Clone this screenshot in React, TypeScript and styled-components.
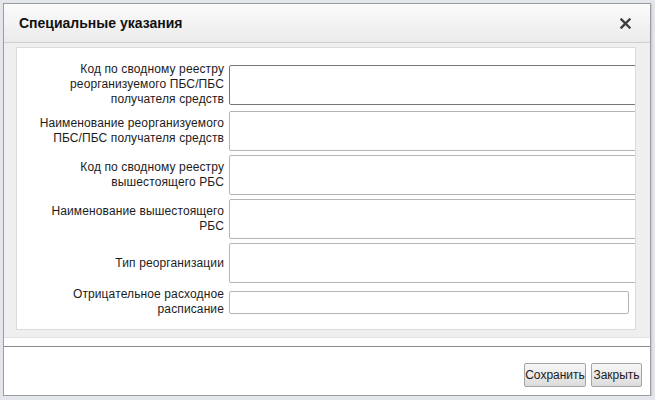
import React from "react";
import styled, { createGlobalStyle } from "styled-components";

const GlobalStyle = createGlobalStyle`
  html, body {
    margin: 0;
    padding: 0;
    background: #e3e7ec;
    font-family: "Liberation Sans", Arial, sans-serif;
  }
`;

const Page = styled.div`
  padding: 3px 0 0 3px;
`;

const Dialog = styled.div`
  width: 646px;
  border: 1px solid #9c9c9c;
  background: #ffffff;
  display: flex;
  flex-direction: column;
  box-shadow: 1px 1px 2px rgba(0, 0, 0, 0.15);
`;

const Header = styled.div`
  height: 38px;
  padding: 0 19px 0 15px;
  display: flex;
  align-items: center;
  justify-content: space-between;
  background: linear-gradient(#fbfbfb, #ebebeb);
  border-bottom: 1px solid #cfcfcf;
`;

const Title = styled.div`
  font-size: 14px;
  font-weight: bold;
  color: #111;
`;

const CloseButton = styled.button`
  border: 0;
  padding: 0;
  background: none;
  width: 11px;
  height: 11px;
  display: flex;
  cursor: pointer;
`;

const Body = styled.div`
  background: #efefef;
  padding: 4px 14px 7px 12px;
  border-bottom: 1px solid #e2e2e2;
`;

const Panel = styled.div`
  background: #ffffff;
  border: 1px solid #dadada;
  padding: 14px 0 12px 12px;
  overflow: hidden;
  display: grid;
  grid-template-columns: 195px 1fr;
  column-gap: 5px;
  row-gap: 4px;
  align-items: center;
`;

const Label = styled.label`
  font-size: 12px;
  line-height: 15px;
  letter-spacing: 0.12px;
  color: #1c1c1c;
  text-align: right;
`;

const Field = styled.textarea<{ $tall?: boolean; $focused?: boolean }>`
  display: block;
  box-sizing: border-box;
  width: ${(p) => (p.$tall ? "420px" : "400px")};
  height: ${(p) => (p.$tall ? "40px" : "23px")};
  margin: 0;
  padding: 2px 4px;
  border: 1px solid ${(p) => (p.$focused ? "#767676" : "#b4b4b4")};
  border-radius: 2px;
  background: #fff;
  resize: none;
  font-family: "Liberation Sans", Arial, sans-serif;
  font-size: 12px;
  outline: none;
`;

const Footer = styled.div`
  margin-top: 8px;
  border-top: 1px solid #8a8a8a;
  padding: 16px 8px 8px 0;
  display: flex;
  justify-content: flex-end;
  gap: 5px;
`;

const Button = styled.button<{ $w: number }>`
  width: ${(p) => p.$w}px;
  height: 24px;
  padding: 0;
  border: 1px solid #a3a3a3;
  border-radius: 2px;
  background: linear-gradient(#f7f7f7, #dcdcdc);
  font-family: "Liberation Sans", Arial, sans-serif;
  font-size: 12px;
  color: #1c1c1c;
  cursor: pointer;
`;

const fields: { label: React.ReactNode; tall: boolean; focused?: boolean }[] = [
  {
    label: (
      <>
        Код по сводному реестру
        <br />
        реорганизуемого ПБС/ПБС
        <br />
        получателя средств
      </>
    ),
    tall: true,
    focused: true,
  },
  {
    label: (
      <>
        Наименование реорганизуемого
        <br />
        ПБС/ПБС получателя средств
      </>
    ),
    tall: true,
  },
  {
    label: (
      <>
        Код по сводному реестру
        <br />
        вышестоящего РБС
      </>
    ),
    tall: true,
  },
  {
    label: (
      <>
        Наименование вышестоящего
        <br />
        РБС
      </>
    ),
    tall: true,
  },
  { label: <>Тип реорганизации</>, tall: true },
  {
    label: (
      <>
        Отрицательное расходное
        <br />
        расписание
      </>
    ),
    tall: false,
  },
];

export default function App() {
  return (
    <>
      <GlobalStyle />
      <Page>
        <Dialog>
          <Header>
            <Title>Специальные указания</Title>
            <CloseButton aria-label="Закрыть">
              <svg width="11" height="11" viewBox="0 0 11 11">
                <path
                  d="M1.5 1.5 L9.5 9.5 M9.5 1.5 L1.5 9.5"
                  stroke="#3d3d3d"
                  strokeWidth="2.4"
                  strokeLinecap="square"
                />
              </svg>
            </CloseButton>
          </Header>
          <Body>
            <Panel>
              {fields.map((f, i) => (
                <React.Fragment key={i}>
                  <Label>{f.label}</Label>
                  <Field $tall={f.tall} $focused={f.focused} />
                </React.Fragment>
              ))}
            </Panel>
          </Body>
          <Footer>
            <Button $w={62}>Сохранить</Button>
            <Button $w={51}>Закрыть</Button>
          </Footer>
        </Dialog>
      </Page>
    </>
  );
}
